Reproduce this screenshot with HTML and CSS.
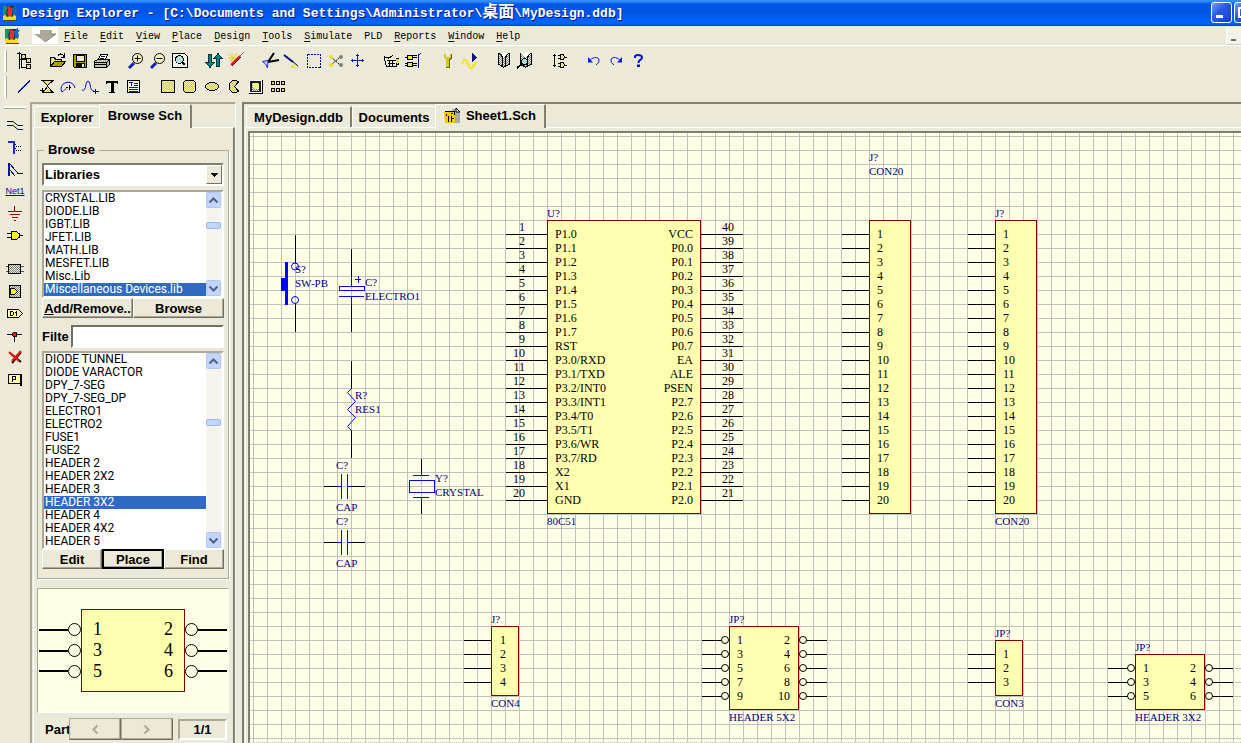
FILE: index.html
```html
<!DOCTYPE html>
<html lang="en">
<head>
<meta charset="utf-8">
<title>Design Explorer</title>
<link rel="stylesheet" href="styles.css">
</head>
<body>
<svg class="defs" width="0" height="0" aria-hidden="true">
  <defs>
    <pattern id="yel" width="2" height="2" patternUnits="userSpaceOnUse"><rect width="2" height="2" fill="#f4f0a8"/><path d="M0 0h1v1h1v1H1V1H0z" fill="#d2cc50"/></pattern>
    <pattern id="gry" width="2" height="2" patternUnits="userSpaceOnUse"><rect width="2" height="2" fill="#ece9d8"/><path d="M0 0h1v1h1v1H1V1H0z" fill="#808080"/></pattern>
    <symbol id="app" viewBox="0 0 16 16">
      <path d="M1 1h13v12H1z" fill="#083830"/>
      <path d="M1 1h4v4l-1 2 1 5H1z" fill="#109868"/>
      <path d="M5 2l2-1 2 2 1-1v9H6l-1-4 1-2z" fill="#f02838"/>
      <path d="M10 3l2-1 1-2h1v2h2l-2 3 1 2-1 4h-3z" fill="#1868b8"/>
      <path d="M1 11l2-1 2 2 3-1 2 1 2-2 2 1v4H1z" fill="#f8d820"/>
      <path d="M2 15h13v1H2z" fill="#604800"/>
    </symbol>
  </defs>
</svg>

<header class="titlebar">
  <svg class="app-icon" width="16" height="16"><use href="#app"/></svg>
  <h1>Design Explorer - [C:\Documents and Settings\Administrator\<span class="cjk">桌面</span>\MyDesign.ddb]</h1>
  <button class="win-btn" aria-label="Minimize"><svg width="19" height="18"><path d="M4 12h7v3H4z" fill="#fff"/></svg></button>
  <button class="win-btn last" aria-label="Maximize"><svg width="19" height="18"><path d="M4 5h10v9H4z" fill="none" stroke="#fff" stroke-width="2"/></svg></button>
</header>

<nav class="menubar">
  <svg class="app-icon" width="16" height="16"><use href="#app"/></svg>
  <button class="arrow" aria-label="Menu"><svg width="26" height="17"><path d="M8 3h11v4h5l-11 8L2 7h6z" fill="#aca899"/><path d="M19 3v4h5l-11 8" fill="none" stroke="#888474"/></svg></button>
  <button class="menu"><u>F</u>ile</button>
  <button class="menu"><u>E</u>dit</button>
  <button class="menu"><u>V</u>iew</button>
  <button class="menu"><u>P</u>lace</button>
  <button class="menu"><u>D</u>esign</button>
  <button class="menu"><u>T</u>ools</button>
  <button class="menu"><u>S</u>imulate</button>
  <button class="menu">PLD</button>
  <button class="menu"><u>R</u>eports</button>
  <button class="menu"><u>W</u>indow</button>
  <button class="menu"><u>H</u>elp</button>
  <button class="mdi-min" aria-label="Minimize document"></button>
</nav>

<div class="toolbars">
  <div class="toolbar">
    <i class="grip"></i>
    <div class="set">
      <button aria-label="Explorer panel"><svg><path d="M6.500 2V19M4 3.500H8M6 9.500H13M8.500 8V17.500H13" stroke="#000"/><rect x="8.500" y="4.500" width="4" height="4" fill="url(#yel)" stroke="#000"/><rect x="13.500" y="8.500" width="4" height="4" fill="url(#yel)" stroke="#000"/><rect x="13.500" y="14.500" width="4" height="4" fill="url(#yel)" stroke="#000"/></svg></button>
    </div>
    <div class="set">
      <button aria-label="Open"><svg><path d="M3.500 16V7.500H7L8.500 9H14.500V11" stroke="#000" fill="url(#yel)"/><path d="M3.500 16.500L7.500 11.500H18.500L14.500 16.500Z" fill="#a8a000" stroke="#000"/><path d="M11 5.500Q14 2 17 6.500M17.500 3V7H14" stroke="#000"/></svg></button>
      <button aria-label="Save"><svg><path d="M4.500 4.500H17.500V17.500H5.500L4.500 16.500Z" fill="#a8a000" stroke="#000"/><path d="M7 5h8v6H7z" fill="#ece9d8" stroke="#000"/><path d="M7 13h9v5H7z" fill="#000"/><path d="M13 14h2v3h-2z" fill="#ece9d8"/></svg></button>
      <button aria-label="Print"><svg><path d="M7.500 9.500L9.500 4.500H16.500L14.500 9.500Z" fill="#fff" stroke="#000"/><path d="M10 6.500H14M9 8.500H13" stroke="#000"/><path d="M3.500 11.500L6.500 9.500H18.500V14.500L15.500 17.500H3.500Z" fill="#c8c4b4" stroke="#000"/><path d="M4 12.500H15.500V17M4 14.500H15M16 12L18 10" stroke="#000"/></svg></button>
    </div>
    <div class="set">
      <button aria-label="Zoom in"><svg class="smooth"><path d="M4 18L9 13" stroke="#1020c0" stroke-width="3"/><circle cx="12.500" cy="8.500" r="5" stroke="#000" fill="#f4f0c0"/><path d="M9.500 8.500H15.500M12.500 5.500V11.500" stroke="#000"/></svg></button>
      <button aria-label="Zoom out"><svg class="smooth"><path d="M4 18L9 13" stroke="#1020c0" stroke-width="3"/><circle cx="12.500" cy="8.500" r="5" stroke="#000" fill="#f4f0c0"/><path d="M9.500 8.500H15.500" stroke="#000"/></svg></button>
      <button aria-label="Fit document"><svg><path d="M3.500 3.500H15.500L18.500 6.500V17.500H3.500Z" fill="#f4f2e8" stroke="#000"/><circle cx="10.500" cy="9.500" r="4" stroke="#000" fill="#b8dcd8"/><path d="M13 12L16 15" stroke="#000" stroke-width="2"/></svg></button>
    </div>
    <div class="set">
      <button aria-label="Up or down hierarchy"><svg><path d="M5.500 4.500H8.500V12.500H11L7 17.500L3 12.500H5.500Z" fill="#108080" stroke="#003838"/><path d="M13.500 16.500H16.500V8.500H19L15 3.500L11 8.500H13.500Z" fill="#108080" stroke="#003838"/></svg></button>
      <button aria-label="Cross probe"><svg class="smooth"><path d="M3 4L12 11M12 3L5 12M7 3V13M3 8H12" stroke="#e0d020"/><path d="M6 15L15 6" stroke="#d01818" stroke-width="2"/><path d="M7 16L16 7" stroke="#600" /><path d="M15 6L19 2" stroke="#777"/></svg></button>
    </div>
    <div class="set">
      <button aria-label="Cut"><svg class="smooth"><path d="M9 12L15 3M9 12L20 10" stroke="#000" stroke-width="2"/><path d="M3.500 11.500L9 10.500L8.500 18L6.500 14Z" fill="#c8d0ff" stroke="#2030e0"/></svg></button>
      <button aria-label="Paste"><svg class="smooth"><path d="M3 5L12 12" stroke="#0a1080" stroke-width="2"/><path d="M11 11L17 16" stroke="#000"/><path d="M9 18L12 14L15 18Z" fill="#f0e040"/></svg></button>
      <button aria-label="Select area"><svg><rect x="4.500" y="4.500" width="13" height="13" stroke="#0000b8" stroke-dasharray="2 1"/></svg></button>
      <button aria-label="Deselect all"><svg class="smooth"><path d="M6 7L15 15M6 15L15 7" stroke="#000" stroke-dasharray="2 1"/><circle cx="6" cy="7" r="2" fill="#e8e020"/><circle cx="6" cy="15" r="2" fill="#e8e020"/><circle cx="16" cy="7" r="2" fill="#808080"/><circle cx="16" cy="15" r="2" fill="#808080"/></svg></button>
      <button aria-label="Move selection"><svg><path d="M4 10.500H17M10.500 4V17M5.500 9V12M15.500 9V12M9 5.500H12M9 15.500H12" stroke="#1010d8"/></svg></button>
    </div>
    <div class="set">
      <button aria-label="Wiring tools"><svg><path d="M3 7.500H8M6 10.500H15V16.500H5.500L3.500 9M3 6V11M15 8.500H17.500V14H15M7 8.500L12 5.500M7 13.500H14M8.500 10V16M11.500 10V16" stroke="#000"/><rect x="15" y="9" width="3" height="4" fill="#e0d850"/></svg></button>
      <button aria-label="Drawing tools"><svg><path d="M2 7.500H14M2 13.500H14M2 15.500H14M10 5.500H14" stroke="#000"/><rect x="4.500" y="5.500" width="5" height="4" fill="#f0e840" stroke="#000"/><rect x="4.500" y="12.500" width="5" height="4" fill="url(#yel)" stroke="#000"/><path d="M15.500 18V5L18 3" stroke="#0a1080"/></svg></button>
    </div>
    <div class="set">
      <button aria-label="Setup simulator"><svg><path d="M7 4V8L9 10V17H13V10L15 8V4H13V7H9V4Z" fill="#d0c820"/><path d="M14.500 4V8L12.500 10V18M9 17.500H13" stroke="#706800"/></svg></button>
      <button aria-label="Run simulation"><svg><path d="M3 14L5 10H7L11 18H13L17 12" stroke="#f0e800" stroke-width="2"/><path d="M13 3L18 7.500L13 12Z" fill="#0a1080"/></svg></button>
    </div>
    <div class="set">
      <button aria-label="Add library"><svg><path d="M5.500 3V14L10.500 17.500L16.500 14V3" fill="url(#gry)" stroke="#000"/><path d="M6 3L9.500 7V17M16 3L12.500 7V17" stroke="#000"/><path d="M8 3H14L11 8Z" fill="#fff"/></svg></button>
      <button aria-label="Find part"><svg><path d="M5.500 3V14L10.500 17.500L16.500 14V3" fill="url(#gry)" stroke="#000"/><path d="M16 3L12.500 7V17" stroke="#000"/><path d="M7 3H14L10 8Z" fill="#fff"/><circle cx="9.500" cy="11.500" r="3" fill="#a0e0e0" stroke="#000"/><path d="M2 18L7 14" stroke="#000" stroke-width="2"/></svg></button>
    </div>
    <div class="set">
      <button aria-label="Increment part"><svg><path d="M5.500 4V17M4 5.500H7M4 15.500H7M9 5.500H12M9 8.500H12M14 7.500H18M9 13.500H12M9 16.500H12M14 15.500H18" stroke="#000"/><path d="M11.500 4.500H14L15.500 7L14 9.500H11.500ZM11.500 12.500H14L15.500 15L14 17.500H11.500Z" stroke="#000" fill="#f0e880"/></svg></button>
    </div>
    <div class="set">
      <button aria-label="Undo"><svg class="smooth"><path d="M6 11Q12 5 16 9Q17 13 13 15" stroke="#0a1ed0"/><path d="M5 7L10 12.500H5Z" fill="#0a1ed0"/></svg></button>
      <button aria-label="Redo"><svg class="smooth"><path d="M16 11Q10 5 6 9Q5 13 9 15" stroke="#0a1ed0"/><path d="M17 7L12 12.500H17Z" fill="#0a1ed0"/></svg></button>
      <button aria-label="Help"><svg class="smooth"><path d="M8 8V7Q8 5 11 5Q15 5 15 7.500Q15 9 13 10Q11.500 11 11.500 13" stroke="#0a10d8" stroke-width="2"/><path d="M10 14.500H13V17H10Z" fill="#0a10d8"/></svg></button>
    </div>
  </div>
  <div class="toolbar">
    <i class="grip"></i>
    <div class="set">
      <button aria-label="Line"><svg><path d="M5 16.500L17 4.500" stroke="#0000c0"/></svg></button>
      <button aria-label="Polygon"><svg><path d="M6 4.500H18L12 10L18 16.500H8L13 10L8 5" fill="url(#yel)" stroke="#000"/><path d="M5 14.500H10M7.500 12V17" stroke="#000"/></svg></button>
      <button aria-label="Elliptical arc"><svg class="smooth"><path d="M5 16A7 6.500 0 1 1 18 12" stroke="#1010d0"/><path d="M5 16L10 12M9 11.500H15M12.500 9V14" stroke="#000" stroke-dasharray="2 1"/></svg></button>
      <button aria-label="Bezier"><svg class="smooth"><path d="M3 14Q6 16 7 8Q9 2 11 8Q12 16 15 15" stroke="#1010d0"/><path d="M14 15.500H20M16.500 13V18" stroke="#0a1060"/></svg></button>
      <button aria-label="Text"><svg><path d="M5 5H17V8H16L15 6.500H12.500V16H14V17H8V16H10V6.500H7L6 8H5Z" fill="#000"/></svg></button>
      <button aria-label="Text frame"><svg><rect x="4.500" y="4.500" width="12" height="12" fill="#f8f8e8" stroke="#000"/><path d="M6 6.500H10M8.500 6V10M11 7.500H15M11 9.500H15M6 11.500H15M6 13.500H15M6 15.500H15" stroke="#1018a0"/></svg></button>
    </div>
    <div class="set">
      <button aria-label="Rectangle"><svg><rect x="4.500" y="4.500" width="13" height="12" fill="url(#yel)" stroke="#000"/></svg></button>
      <button aria-label="Rounded rectangle"><svg><path d="M6.500 4.500H14.500L16.500 6.500V14.500L14.500 16.500H6.500L4.500 14.500V6.500Z" fill="url(#yel)" stroke="#000"/></svg></button>
      <button aria-label="Ellipse"><svg><ellipse cx="11" cy="10.500" rx="6.500" ry="4" fill="url(#yel)" stroke="#000"/></svg></button>
      <button aria-label="Pie chart"><svg><path d="M15.500 6L13 4.500H9.500L6.500 7.500V13.500L9.500 16.500H13L15.500 15L11.500 10.500Z" fill="url(#yel)" stroke="#000"/></svg></button>
      <button aria-label="Graphic image"><svg><path d="M4 4H18V18H4Z" fill="#fff"/><path d="M4 17.500H17.500V4" stroke="#000"/><path d="M5 5H16V16H5Z" fill="#202020"/><path d="M7 7H14V15H7Z" fill="url(#gry)"/><circle cx="11" cy="10" r="3" fill="#f8f080"/></svg></button>
      <button aria-label="Array paste"><svg><path d="M4.500 5.500H7.500V8.500H4.500ZM9.500 5.500H12.500V8.500H9.500ZM14.500 5.500H17.500V8.500H14.500ZM4.500 12.500H7.500V15.500H4.500ZM9.500 12.500H12.500V15.500H9.500ZM14.500 12.500H17.500V15.500H14.500Z" fill="#e8e070" stroke="#000"/></svg></button>
    </div>
  </div>
</div>

<main class="work">
  <div class="wiring">
    <i class="grip flat"></i>
    <div class="set">
      <button aria-label="Wire"><svg class="smooth"><path d="M3 7.500H9L14 11.500H19" stroke="#111"/><path d="M3 11.500H9L14 15.500H19" stroke="#0a1080"/></svg></button>
      <button aria-label="Bus"><svg><path d="M4 5.500H9.500V18" stroke="#2020e0" stroke-width="2"/><path d="M11 8.500L13 10.500H18M11 12.500L13 14.500H18" stroke="#111" stroke-dasharray="1 1"/></svg></button>
      <button aria-label="Bus entry"><svg><path d="M5 5V18" stroke="#1010a0" stroke-width="2"/><path d="M6 6L14 15.500H19M6 12L11 18" stroke="#0a1080"/></svg></button>
      <button class="net" aria-label="Net label">Net1</button>
      <button aria-label="Power port"><svg><path d="M10.500 4V9" stroke="#900"/><path d="M4 9.500H18" stroke="#900"/><path d="M6 12.500H16M8 15.500H14M10 18.500H12" stroke="#900"/></svg></button>
      <button aria-label="Part"><svg><path d="M3 9.500H7M3 13.500H7M15 11.500H19" stroke="#000"/><path d="M7.500 7.500H12.500L15.500 10V13L12.500 15.500H7.500Z" fill="#f8f030" stroke="#000"/></svg></button>
    </div>
    <div class="set">
      <button aria-label="Sheet symbol"><svg><path d="M2 8.500H20M2 13.500H20" stroke="#555"/><rect x="4.500" y="6.500" width="12" height="9" fill="url(#gry)" stroke="#000"/></svg></button>
      <button aria-label="Sheet entry"><svg><rect x="5.500" y="5.500" width="11" height="12" fill="url(#gry)" stroke="#000"/><path d="M6 8.500H10.500L13.500 11.500L10.500 14.500H6Z" fill="#f8f030" stroke="#000"/></svg></button>
      <button aria-label="Port"><svg><path d="M3.500 7.500H14.500L18.500 11.500L14.500 15.500H3.500Z" fill="#ffffb0" stroke="#000"/><path d="M6.500 9V14M6 9.500H8.500L9.500 11V12.500L8.500 13.500H6M12.500 9V14M11 10.500H13" stroke="#000"/></svg></button>
      <button aria-label="Junction"><svg><path d="M3 10.500H18M10.500 10V18" stroke="#0a0a50"/><path d="M9 8H12L13 9V12L12 13H9L8 12V9Z" fill="#400"/><path d="M9 9H12V12H9Z" fill="#d82020"/></svg></button>
      <button aria-label="No ERC"><svg class="smooth"><path d="M6 7L17 16M17 6L8 17" stroke="#300" stroke-width="2"/><path d="M5 6L15 15M17 5L8 15" stroke="#e01818" stroke-width="2"/></svg></button>
      <button aria-label="PCB layout"><svg><path d="M4.500 6.500H16.500V15.500H4.500Z" fill="#ffffa0" stroke="#000"/><path d="M8.500 8V14M8 8.500H11.500V11.500H9" stroke="#000"/><path d="M16 6V18H18V6Z" fill="#000"/></svg></button>
    </div>
  </div>

  <aside class="browser">
    <div class="tabs">
      <button class="tab explorer">Explorer</button>
      <button class="tab active browse">Browse Sch</button>
    </div>
    <div class="page">
      <fieldset>
        <legend>Browse</legend>
        <div class="combo">
          <select aria-label="Browse"><option>Libraries</option></select>
          <svg width="16" height="19" aria-hidden="true"><path d="M4 7h7v1h-1v1h-1v1H8v1H7v-1H6v-1H5V8H4z"/></svg>
        </div>
        <div class="listbox libs">
          <ul role="listbox" aria-label="Libraries">
            <li>CRYSTAL.LIB</li><li>DIODE.LIB</li><li>IGBT.LIB</li><li>JFET.LIB</li><li>MATH.LIB</li><li>MESFET.LIB</li><li>Misc.Lib</li><li class="sel">Miscellaneous Devices.lib</li>
          </ul>
          <div class="scroll">
            <button aria-label="Scroll up"><svg width="13" height="13"><path d="M2.500 8.500L6.500 4.500L10.500 8.500"/></svg></button>
            <i class="thumb"></i>
            <button aria-label="Scroll down"><svg width="13" height="13"><path d="M2.500 4.500L6.500 8.500L10.500 4.500"/></svg></button>
          </div>
        </div>
        <div class="btn-row">
          <button class="btn"><span><u>A</u>dd/Remove..</span></button>
          <button class="btn">Browse</button>
        </div>
        <div class="filter">
          <label for="filter">Filte</label>
          <input id="filter" type="text">
        </div>
        <div class="listbox parts">
          <ul role="listbox" aria-label="Components">
            <li>DIODE TUNNEL</li><li>DIODE VARACTOR</li><li>DPY_7-SEG</li><li>DPY_7-SEG_DP</li><li>ELECTRO1</li><li>ELECTRO2</li><li>FUSE1</li><li>FUSE2</li><li>HEADER 2</li><li>HEADER 2X2</li><li>HEADER 3</li><li class="sel">HEADER 3X2</li><li>HEADER 4</li><li>HEADER 4X2</li><li>HEADER 5</li>
          </ul>
          <div class="scroll">
            <button aria-label="Scroll up"><svg width="13" height="13"><path d="M2.500 8.500L6.500 4.500L10.500 8.500"/></svg></button>
            <i class="thumb"></i>
            <button aria-label="Scroll down"><svg width="13" height="13"><path d="M2.500 4.500L6.500 8.500L10.500 4.500"/></svg></button>
          </div>
        </div>
        <div class="btn-row">
          <button class="btn">Edit</button>
          <button class="btn default">Place</button>
          <button class="btn">Find</button>
        </div>
      </fieldset>
      <div class="preview">
        <svg viewBox="38 589 190 123" width="190" height="123" role="img" aria-label="HEADER 3X2">
          <rect x="81.500" y="609.500" width="103" height="82" fill="#ffffb0" stroke="#800000"/>
          <path d="M39 630H68M39 651H68M39 671H68M198 630H227M198 651H227M198 671H227" stroke="#000" stroke-width="2"/>
          <g fill="#ffffe6" stroke="#000"><circle cx="74.500" cy="629.500" r="6"/><circle cx="74.500" cy="650.500" r="6"/><circle cx="74.500" cy="671.500" r="6"/><circle cx="191.500" cy="629.500" r="6"/><circle cx="191.500" cy="650.500" r="6"/><circle cx="191.500" cy="671.500" r="6"/></g>
          <g class="big"><text x="93" y="635">1</text><text x="93" y="656">3</text><text x="93" y="677">5</text><text x="164" y="635">2</text><text x="164" y="656">4</text><text x="164" y="677">6</text></g>
        </svg>
      </div>
      <div class="pager">
        <span class="part">Part</span>
        <button class="btn" aria-label="Previous part"><svg width="8" height="11"><path d="M6.500 1.500L2.500 5.500L6.500 9.500"/></svg></button>
        <button class="btn" aria-label="Next part"><svg width="8" height="11"><path d="M1.500 1.500L5.500 5.500L1.500 9.500"/></svg></button>
        <output>1/1</output>
      </div>
    </div>
  </aside>

  <section class="document">
    <div class="tabs">
      <button class="tab ddb">MyDesign.ddb</button>
      <button class="tab docs">Documents</button>
      <button class="tab active sheet"><svg width="16" height="16" aria-hidden="true"><path d="M8 1h5l3 3v11H8z" fill="#aaa"/><path d="M12 0l4 4h-4z" fill="#fff" stroke="#000"/><path d="M0 4h11v11H1z" fill="#f8c800"/><path d="M1 3.500H10M2.500 6V8M4.500 8V14M7 6L9 5M7.500 8V14M7 10.500H10M10.500 3V7" stroke="#000" fill="none"/></svg>Sheet1.Sch</button>
    </div>
    <div class="page">
      <svg id="sheet" class="sheet-canvas" role="img" aria-label="Schematic sheet"></svg>
    </div>
  </section>
</main>
<script src="schematic.js"></script>
</body>
</html>
```

FILE: styles.css
```css
* { box-sizing: border-box; }

body {
  margin: 0;
  height: 100vh;
  display: flex;
  flex-direction: column;
  overflow: hidden;
  background: #ece9d8;
  color: #000;
  font-family: "Liberation Sans", sans-serif;
  font-size: 13px;
}

button {
  margin: 0;
  padding: 0;
  border: 0;
  background: none;
  color: inherit;
  font: inherit;
}

.defs { position: absolute; }

/* Title bar */
.titlebar {
  flex: none;
  height: 26px;
  display: flex;
  align-items: center;
  gap: 2px;
  padding-left: 2px;
  background: linear-gradient(#3a92ff 0, #2a82f8 2px, #0058e8 4px, #0054e3 12px, #005cf4 18px, #0066ff 22px, #0060f4 24px, #003dc8 26px);
}
.titlebar h1 {
  flex: 1;
  margin: 0;
  padding-left: 2px;
  color: #fff;
  font: bold 13px/24px "Liberation Mono", "Noto Sans CJK SC", monospace;
  white-space: pre;
  text-shadow: 1px 1px 0 #0a1883;
}
.cjk { font-size: 16px; }
.app-icon { flex: none; }
.win-btn {
  width: 21px;
  height: 21px;
  margin-bottom: 2px;
  border: 1px solid #fff;
  border-radius: 3px;
  background: linear-gradient(135deg, #7c9cf4, #2a5ce8 40%, #1240c8);
  overflow: hidden;
}
.win-btn.last { margin-right: -14px; }
.win-btn svg { display: block; }

/* Menu bar */
.menubar {
  flex: none;
  height: 20px;
  display: flex;
  align-items: center;
  gap: 12px;
  padding-left: 4px;
  border-bottom: 1px solid #fff;
}
.arrow {
  width: 26px;
  height: 17px;
  margin-right: -6px;
  background: #fff;
}
.arrow svg { display: block; }
.menu {
  padding-top: 2px;
  font: 10px/17px "Liberation Mono", monospace;
}
.menu u { text-underline-offset: 2px; }
.mdi-min {
  width: 15px;
  height: 18px;
  margin-left: auto;
  padding: 10px 5px 0 4px;
  border-left: 1px solid #fff;
  border-bottom: 1px solid #d0ccb8;
  background: #f4f2e8;
}
.mdi-min::after {
  content: "";
  display: block;
  height: 2px;
  background: #716f64;
}

/* Toolbars */
.toolbars {
  flex: none;
  display: flex;
  flex-direction: column;
  gap: 4px;
  padding: 4px 0;
}
.toolbar {
  display: flex;
  gap: 12px;
  height: 22px;
  padding-left: 4px;
}
.grip {
  width: 3px;
  margin-right: -6px;
  background: #fff;
  border-right: 1px solid #aca899;
}
.set { display: flex; }
.set button {
  width: 22px;
  height: 22px;
}
.set svg {
  display: block;
  width: 22px;
  height: 22px;
  fill: none;
  shape-rendering: crispEdges;
}
.set svg.smooth { shape-rendering: auto; }

.work {
  flex: 1;
  min-height: 0;
  display: flex;
}
.wiring {
  flex: none;
  width: 30px;
  padding: 4px 4px 0;
  display: flex;
  flex-direction: column;
  gap: 12px;
}
.wiring .set { flex-direction: column; }
.grip.flat {
  width: 22px;
  height: 3px;
  margin: 0 0 -7px;
  border: 0;
  border-bottom: 1px solid #aca899;
}
.set .net {
  color: #0000c8;
  font: 9px/12px "Liberation Sans", sans-serif;
  text-decoration: underline;
}

/* Tabs */
.tabs {
  display: flex;
  align-items: flex-end;
  height: 23px;
}
.tab {
  height: 21px;
  border: 1px solid #fff;
  border-bottom: 0;
  border-radius: 2px 2px 0 0;
  font-weight: bold;
  white-space: nowrap;
}
.tab.active {
  height: 24px;
  margin-bottom: -1px;
  padding-bottom: 2px;
  border-right: 2px solid #817e70;
  background: #ece9d8;
  position: relative;
}
.explorer { width: 65px; border-right: 0; }
.browse { width: 93px; }
.ddb { width: 106px; border-right: 2px solid #817e70; }
.docs { width: 83px; border-right: 0; }
.sheet {
  width: 111px;
  display: flex;
  align-items: center;
  justify-content: center;
  gap: 6px;
}

/* Library browser */
.browser {
  flex: none;
  width: 206px;
  display: flex;
  flex-direction: column;
  padding: 0 0 0 1px;
  border-left: 2px solid #aca899;
  border-top: 2px solid #aca899;
  border-right: 1px solid #fff;
  overflow: hidden;
}
.browser .tabs { padding-left: 1px; }
.browser .page {
  flex: 1;
  padding: 14px 4px 0 3px;
  border-left: 1px solid #fff;
  border-top: 1px solid #fff;
  border-right: 2px solid #817e70;
}
fieldset {
  min-width: 0;
  margin: 0;
  padding: 5px 4px 9px;
  border: 1px solid #aca899;
  box-shadow: 1px 1px 0 #fff;
}
legend {
  margin-left: 2px;
  padding: 0 4px;
  font-weight: bold;
  line-height: 16px;
}
.combo {
  display: flex;
  height: 23px;
  margin-bottom: 4px;
  border: 2px solid;
  border-color: #817e70 #fff #fff #817e70;
  background: #fff;
}
.combo select {
  flex: 1;
  min-width: 0;
  padding: 0 1px;
  border: 0;
  appearance: none;
  background: #fff;
  color: #000;
  font: bold 13px/19px "Liberation Sans", sans-serif;
}
.combo svg {
  background: #ece9d8;
  border: 1px solid;
  border-color: #fff #716f64 #716f64 #fff;
}
.listbox {
  display: flex;
  border: 2px solid;
  border-color: #aca899 #fff #fff #aca899;
  background: #fff;
}
.listbox.parts { border-bottom-width: 1px; }
.listbox ul {
  flex: 1;
  min-width: 0;
  margin: 0;
  padding: 0;
  list-style: none;
  font: 12px/13px Roboto, sans-serif;
}
.listbox li {
  padding-left: 1px;
  white-space: nowrap;
}
.sel { background: #316ac5; color: #fff; }
.scroll {
  width: 16px;
  display: flex;
  flex-direction: column;
  background: #f4f3ee;
}
.scroll button {
  width: 15px;
  height: 16px;
  border: 1px solid #b0c8f8;
  border-radius: 2px;
  background: #c4d5fb;
}
.scroll button:last-child { margin-top: auto; }
.scroll button svg {
  display: block;
  fill: none;
  stroke: #4d6185;
  stroke-width: 2;
}
.thumb {
  width: 15px;
  height: 7px;
  border: 1px solid #9db8f0;
  border-radius: 2px;
  background: #c4d5fb;
}
.libs .thumb { margin-top: 14px; }
.parts .thumb { margin-top: 50px; }
.btn-row { display: flex; }
.btn {
  flex: 1;
  min-width: 0;
  height: 20px;
  display: flex;
  align-items: center;
  justify-content: center;
  overflow: hidden;
  border: 1px solid;
  border-color: #fff #716f64 #716f64 #fff;
  box-shadow: inset -1px -1px 0 #aca899;
  font-weight: bold;
}
.btn.default { border: 2px solid #000; }
.filter {
  display: flex;
  align-items: center;
  margin: 7px 0 3px;
}
.filter label {
  width: 29px;
  font-weight: bold;
}
.filter input {
  flex: 1;
  min-width: 0;
  height: 23px;
  border: 2px solid;
  border-color: #716f64 #fff #fff #716f64;
  background: #fff;
}
.preview {
  margin-top: 9px;
  border: 1px solid;
  border-color: #aca899 #fff #fff #aca899;
  background: #ffffe6;
}
.preview svg { display: block; width: 100%; height: auto; }
.big { font: 18px "Liberation Serif", serif; }
.pager {
  display: flex;
  align-items: center;
  margin: 5px 2px 0 8px;
}
.part {
  width: 24px;
  font-weight: bold;
}
.pager .btn {
  height: 22px;
  border-color: #aca899 #716f64 #716f64 #aca899;
}
.pager svg { fill: none; stroke: #aca899; stroke-width: 2; }
.pager output {
  width: 49px;
  margin-left: 5px;
  border: 2px solid;
  border-color: #aca899 #fff #fff #aca899;
  font-weight: bold;
  line-height: 17px;
  text-align: center;
}

/* Document window */
.document {
  flex: 1;
  min-width: 0;
  display: flex;
  flex-direction: column;
  margin-left: 6px;
  padding-left: 1px;
  border-left: 2px solid #817e70;
  border-top: 2px solid #817e70;
}
.document .tabs { padding-left: 1px; }
.document .page {
  flex: 1;
  min-height: 0;
  padding: 3px 0 0 2px;
  border-left: 1px solid #fff;
  border-top: 1px solid #fff;
}
.sheet-canvas {
  display: block;
  width: 100%;
  height: 100%;
  border-left: 2px solid #817e70;
  border-top: 2px solid #817e70;
  border-bottom: 1px dotted #c0c0c0;
  background: #ffffe6;
  shape-rendering: crispEdges;
}
.sheet-canvas text { font: 11px "Liberation Serif", serif; fill: #000080; }
.sheet-canvas text.pin { font-size: 12px; fill: #000; }
.sheet-canvas .end { text-anchor: end; }
.body { fill: #ffffb0; stroke: #800000; }
.lead { fill: none; stroke: #000; }
.bubble { fill: #ffffe6; stroke: #000; shape-rendering: auto; }
.part-line { fill: none; stroke: #0000ff; }
.round { shape-rendering: auto; }
.solid { fill: #0000ff; }
```

FILE: schematic.js
```js
const NS = "http://www.w3.org/2000/svg";
const sheet = document.getElementById("sheet");
const PITCH = 14;

function add(parent, name, attrs, text) {
  const el = document.createElementNS(NS, name);
  for (const key in attrs) el.setAttribute(key, attrs[key]);
  if (text !== undefined) el.textContent = text;
  parent.appendChild(el);
  return el;
}

// Background grid
const defs = add(sheet, "defs", {});
const grid = add(defs, "pattern", { id: "grid", x: 3, y: 3, width: PITCH, height: PITCH, patternUnits: "userSpaceOnUse" });
add(grid, "path", { d: "M0 0H14V1H1V14H0Z", fill: "#c0c0c0" });
add(sheet, "rect", { width: "100%", height: "100%", fill: "url(#grid)" });

const root = add(sheet, "g", { transform: "translate(-250 -133)" });

const label = (x, y, s) => add(root, "text", { x, y }, s);
const pinText = (x, y, s, end) => add(root, "text", { x, y, class: end ? "pin end" : "pin" }, s);
const lead = d => add(root, "path", { d, class: "lead" });
const stroke = d => add(root, "path", { d, class: "part-line" });
const body = (x, y, w, h) => add(root, "rect", { x: x + 0.5, y: y + 0.5, width: w - 1, height: h - 1, class: "body" });

// Single-row connectors
function connector(x, y, w, count, textX) {
  body(x, y, w, (count + 1) * PITCH);
  for (let i = 0; i < count; i++) {
    const py = y + PITCH * (i + 1);
    lead(`M${x - 27} ${py + 0.5}H${x}`);
    pinText(textX, py + 4, i + 1);
  }
}

// Double-row headers with inverted pins
function header(x, y, rows) {
  body(x, y, 70, (rows + 1) * PITCH);
  for (let i = 0; i < rows; i++) {
    const py = y + PITCH * (i + 1);
    lead(`M${x - 27} ${py + 0.5}H${x - 7}M${x + 78} ${py + 0.5}H${x + 98}`);
    add(root, "circle", { cx: x - 4, cy: py, r: 3.5, class: "bubble" });
    add(root, "circle", { cx: x + 74, cy: py, r: 3.5, class: "bubble" });
    pinText(x + 8, py + 4, i * 2 + 1);
    pinText(x + 61, py + 4, i * 2 + 2, true);
  }
}

// Microcontroller
const left = ["P1.0", "P1.1", "P1.2", "P1.3", "P1.4", "P1.5", "P1.6", "P1.7", "RST", "P3.0/RXD", "P3.1/TXD", "P3.2/INT0", "P3.3/INT1", "P3.4/T0", "P3.5/T1", "P3.6/WR", "P3.7/RD", "X2", "X1", "GND"];
const right = ["VCC", "P0.0", "P0.1", "P0.2", "P0.3", "P0.4", "P0.5", "P0.6", "P0.7", "EA", "ALE", "PSEN", "P2.7", "P2.6", "P2.5", "P2.4", "P2.3", "P2.2", "P2.1", "P2.0"];
body(547, 220, 154, 294);
left.forEach((name, i) => {
  const y = 234 + PITCH * i;
  lead(`M506 ${y + 0.5}H547M701 ${y + 0.5}H743`);
  pinText(525, y - 3, i + 1, true);
  pinText(722, y - 3, 40 - i);
  pinText(555, y + 4, name);
  pinText(693, y + 4, right[i], true);
});
label(547, 217, "U?");
label(547, 525, "80C51");

connector(869, 220, 42, 20, 877);
label(869, 161, "J?");
label(869, 175, "CON20");
connector(995, 220, 42, 20, 1003);
label(995, 217, "J?");
label(995, 525, "CON20");
connector(491, 626, 28, 4, 500);
label(491, 623, "J?");
label(491, 707, "CON4");
connector(995, 640, 28, 3, 1003);
label(995, 637, "JP?");
label(995, 707, "CON3");
header(729, 626, 5);
label(729, 623, "JP?");
label(729, 721, "HEADER 5X2");
header(1135, 654, 3);
label(1135, 651, "JP?");
label(1135, 721, "HEADER 3X2");

// Push button
lead("M295.5 235V263M295.5 304V332");
add(root, "circle", { cx: 295, cy: 266.5, r: 3.5, class: "part-line round" });
add(root, "circle", { cx: 295, cy: 300, r: 3.5, class: "part-line round" });
add(root, "path", { d: "M285 262H288V305H285V291H281V278H285Z", class: "solid" });
label(295, 273, "S?");
label(295, 287, "SW-PB");

// Electrolytic capacitor
lead("M351.5 249V276M351.5 304V332");
stroke("M351.5 276V286M351.5 297V304M339 296.5H364M339.5 286.5H364.5V290.5H339.5ZM355 279.5H361M358.5 276V283");
label(365, 286, "C?");
label(365, 300, "ELECTRO1");

// Resistor
lead("M351.5 361V389M351.5 430V458");
add(root, "path", { d: "M351.5 388.5L347.5 392.5L355.5 401.5L347.5 409.5L355.5 417.5L347.5 426.5L351.5 430.5", class: "part-line round" });
label(355, 399, "R?");
label(355, 413, "RES1");

// Ceramic capacitors
for (const y of [486, 542]) {
  lead(`M324 ${y + 0.5}H337M351 ${y + 0.5}H365`);
  stroke(`M337 ${y + 0.5}H341M348 ${y + 0.5}H351M341.5 ${y - 12}V${y + 13}M347.5 ${y - 12}V${y + 13}`);
  label(336, y - 17, "C?");
  label(336, y + 25, "CAP");
}

// Crystal
lead("M421.5 459V471M421.5 501V514");
stroke("M421.5 471V475M421.5 498V501M413 475.5H429M413 497.5H429M409.5 480.5H434.5V492.5H409.5Z");
label(435, 482, "Y?");
label(435, 496, "CRYSTAL");
```
